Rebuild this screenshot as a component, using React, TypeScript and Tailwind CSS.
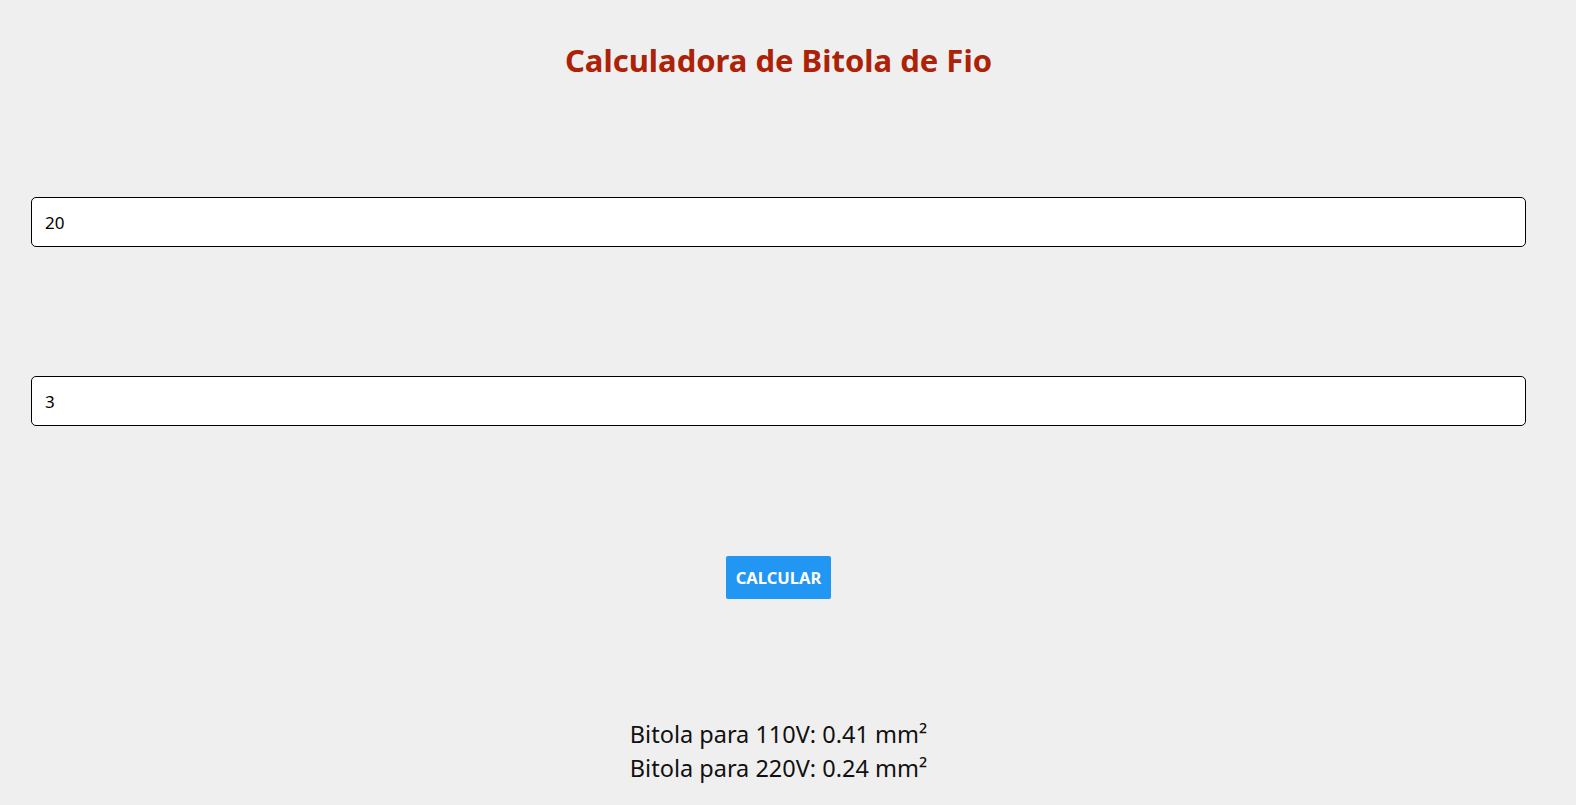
import React, { useState } from 'react'

const font = { fontFamily: '"Noto Sans", "Open Sans", sans-serif' }

const App: React.FC = () => {
  const [power, setPower] = useState('20')
  const [length, setLength] = useState('3')

  return (
    <div className="min-h-[805px] w-full bg-[#efefef]" style={font}>
      <div className="w-[1557px] px-[31px] flex flex-col items-center">
        <h1 className="mt-[38px] text-[31px] leading-[44px] font-bold text-[#ad2107]">
          Calculadora de Bitola de Fio
        </h1>

        <input
          value={power}
          onChange={(e) => setPower(e.target.value)}
          className="mt-[115px] w-full h-[50px] rounded-[5px] border border-black bg-white px-[13px] text-[17px] text-black outline-none"
        />

        <input
          value={length}
          onChange={(e) => setLength(e.target.value)}
          className="mt-[129px] w-full h-[50px] rounded-[5px] border border-black bg-white px-[13px] text-[17px] text-black outline-none"
        />

        <button className="mt-[130px] h-[43px] w-[105px] rounded-[2px] bg-[#2196f3] pt-[2px] text-[16.5px] font-bold text-white">
          CALCULAR
        </button>

        <div className="mt-[118px] flex flex-col items-center text-[23.5px] leading-[34px] text-[#111]">
          <p>Bitola para 110V: 0.41 mm²</p>
          <p>Bitola para 220V: 0.24 mm²</p>
        </div>
      </div>
    </div>
  )
}

export default App
